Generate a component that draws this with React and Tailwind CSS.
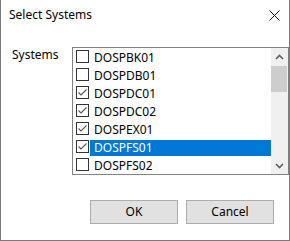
import React from "react";

const systems = [
  { name: "DOSPBK01", checked: false },
  { name: "DOSPDB01", checked: false },
  { name: "DOSPDC01", checked: true },
  { name: "DOSPDC02", checked: true },
  { name: "DOSPEX01", checked: true },
  { name: "DOSPFS01", checked: true, selected: true },
  { name: "DOSPFS02", checked: false },
];

const CheckBox = ({ checked }) => (
  <div className="w-[13px] h-[13px] shrink-0 border border-[#333333] bg-white">
    {checked && (
      <svg width="11" height="11" viewBox="0 0 11 11" className="block">
        <path d="M1.5 5.5 L4 8 L9.5 2.5" fill="none" stroke="#555" strokeWidth="1.1" />
      </svg>
    )}
  </div>
);

const Chevron = ({ up }) => (
  <svg width="9" height="6" viewBox="0 0 9 6" className="block">
    <path
      d={up ? "M1 5 L4.5 1.5 L8 5" : "M1 1 L4.5 4.5 L8 1"}
      fill="none"
      stroke="#606060"
      strokeWidth="1.6"
    />
  </svg>
);

export default function App() {
  return (
    <div
      className="w-[290px] h-[241px] bg-white border-l border-r border-b border-[#7a7a7a] flex flex-col text-[12px] text-black"
      style={{ fontFamily: '"Noto Sans", sans-serif' }}
    >
      {/* title bar */}
      <div className="h-[30px] flex items-center justify-between pl-[8px] pr-[9px]">
        <span className="leading-[16px]">Select Systems</span>
        <svg width="11" height="11" viewBox="0 0 11 11" className="block">
          <path d="M0.5 0.5 L10.5 10.5 M10.5 0.5 L0.5 10.5" stroke="#111" strokeWidth="1" />
        </svg>
      </div>

      {/* body */}
      <div className="flex mt-[17px]">
        <div className="w-[71px] pl-[11px] leading-[16px]">Systems</div>
        <div className="w-[217px] h-[128px] border border-[#828282] flex bg-white">
          <div className="flex-1 flex flex-col">
            {systems.map((s) => (
              <div key={s.name} className="h-[18px] flex items-start pt-[2px] pl-[3px]">
                <CheckBox checked={s.checked} />
                <div
                  className={
                    "ml-[1px] flex-1 h-[16px] leading-[16px] pl-[4px] " +
                    (s.selected ? "bg-[#0078d7] text-white" : "")
                  }
                >
                  {s.name}
                </div>
              </div>
            ))}
          </div>
          <div className="w-[17px] bg-[#f0f0f0] flex flex-col">
            <div className="h-[17px] flex items-center justify-center">
              <Chevron up />
            </div>
            <div className="h-[26px] mt-[1px] mr-[1px] bg-[#cdcdcd]" />
            <div className="flex-1" />
            <div className="h-[17px] flex items-center justify-center">
              <Chevron />
            </div>
          </div>
        </div>
      </div>

      {/* buttons */}
      <div className="flex justify-end gap-[8px] pr-[15px] mt-[25px]">
        <button className="w-[88px] h-[24px] border border-[#adadad] bg-[#e1e1e1] leading-[16px]">
          OK
        </button>
        <button className="w-[88px] h-[24px] border border-[#adadad] bg-[#e1e1e1] leading-[16px]">
          Cancel
        </button>
      </div>
    </div>
  );
}
